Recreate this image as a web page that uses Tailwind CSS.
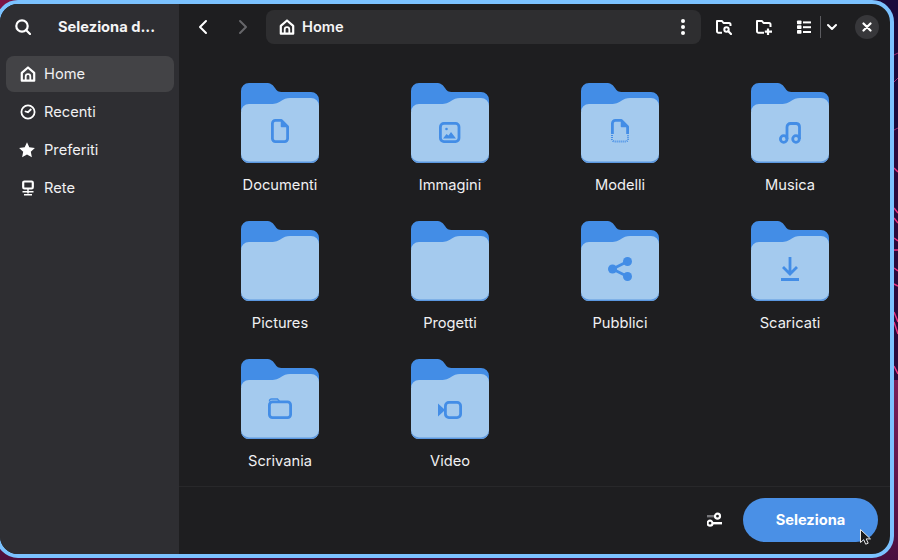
<!DOCTYPE html>
<html><head><meta charset="utf-8"><script src="https://cdn.jsdelivr.net/npm/@tailwindcss/browser@4"></script></head>
<body class="m-0 overflow-hidden bg-[#4a0f3c]">
<div class="relative w-[898px] h-[560px] overflow-hidden bg-[#4a1040] font-['Inter','Noto_Sans',sans-serif] text-white">
  <svg class="absolute inset-0" width="898" height="560" fill="none">
    <defs><linearGradient id="low" x1="0" y1="0" x2="0" y2="1"><stop offset="0" stop-color="#7a2058"/><stop offset="1" stop-color="#4a1040"/></linearGradient></defs>
    <rect x="0" y="545" width="898" height="15" fill="#4a1040"/>
    <rect x="0" y="0" width="30" height="30" fill="#7a1545"/>
    <rect x="0" y="530" width="20" height="30" fill="#4f0f3e"/>
    <rect x="860" y="0" width="38" height="130" fill="#1a0a3c"/>
    <rect x="890" y="130" width="8" height="250" fill="#2a0a3c"/>
    <rect x="890" y="380" width="8" height="180" fill="url(#low)"/>
    <g stroke="#a02a70" stroke-width="1"><path d="M894 55 898 53"/><path d="M894 82 898 78"/><path d="M894 130 898 128"/></g>
    <g stroke="#e8367f" stroke-width="1.500">
      <path d="M894 168 898 172"/><path d="M894 208 898 213"/><path d="M894 218 898 223"/><path d="M894 238 898 241"/><path d="M894 250 898 250"/><path d="M894 268 898 271"/><path d="M894 284 898 286"/><path d="M894 312 898 322"/><path d="M894 322 898 334"/><path d="M894 366 898 374"/>
    </g>
  </svg>
  <div class="absolute left-[-4px] top-0 w-[898px] h-[558px] border-4 border-[#7bc2ff] rounded-[22px] overflow-hidden flex bg-[#1e1e20]">
    <aside class="w-[179px] shrink-0 bg-[#2e2e32] flex flex-col">
      <div class="h-[46px] flex items-center">
        <svg class="ml-[15px] shrink-0" width="16" height="16" viewBox="0 0 16 16" fill="none" stroke="#fff" stroke-width="2.200"><circle cx="7" cy="7" r="5.700"/><path d="M11 11l4 4" stroke-linecap="round"/></svg>
        <span class="ml-[27px] text-[14.67px] font-bold text-[#f4f4f5]">Seleziona d...</span>
      </div>
      <nav class="pl-[6px] pr-[5px] pt-[6px] flex flex-col text-[14.67px] text-[#f0f0f2]">
        <div class="h-9 rounded-lg bg-[#434346] flex items-center gap-2 pl-[14px]">
          <svg width="16" height="16" viewBox="0 0 16 16" fill="none" stroke="#fff" stroke-width="2.200" stroke-linejoin="round"><path d="M1.800 6.800 8 1.500l6.200 5.300V14.700H1.800z"/><path d="M5.700 15V10.500a2.300 2.300 0 0 1 4.600 0V15" stroke-width="1.800"/></svg>
          <span>Home</span>
        </div>
        <div class="h-9 mt-[2px] flex items-center gap-2 pl-[14px]">
          <svg width="16" height="16" viewBox="0 0 16 16" fill="none" stroke="#fff" stroke-width="1.800" stroke-linecap="round"><circle cx="8" cy="8" r="6.600"/><path d="M5.500 7.500 8 8.200 10.800 5.500"/></svg>
          <span>Recenti</span>
        </div>
        <div class="h-9 mt-[2px] flex items-center gap-2 pl-[14px]">
          <svg class="ml-[-1px] mr-px" width="16" height="16" viewBox="0 0 16 16" fill="#fff"><path d="M8 .3l2.300 5 5.600.6-4.100 3.800 1.100 5.600L8 12.500l-4.900 2.800 1.100-5.600-4.100-3.800 5.600-.6z"/></svg>
          <span>Preferiti</span>
        </div>
        <div class="h-9 mt-[2px] flex items-center gap-2 pl-[14px]">
          <svg width="16" height="16" viewBox="0 0 16 16" fill="none" stroke="#fff"><rect x="3.200" y="1.500" width="9.600" height="7" rx="1.200" stroke-width="2.200"/><path d="M8 9v4.500M2.500 11.800h11M4 14.800h8" stroke-width="1.500"/></svg>
          <span>Rete</span>
        </div>
      </nav>
    </aside>
    <main class="flex-1 flex flex-col min-w-0">
      <header class="h-[46px] shrink-0 flex items-center relative">
        <svg class="ml-[18px]" width="12" height="16" viewBox="0 0 12 16" fill="none" stroke="#fff" stroke-width="2" stroke-linecap="round" stroke-linejoin="round"><path d="M9 2 3 8l6 6"/></svg>
        <svg class="ml-[28px]" width="12" height="16" viewBox="0 0 12 16" fill="none" stroke="#66666a" stroke-width="2" stroke-linecap="round" stroke-linejoin="round"><path d="M3 2l6 6-6 6"/></svg>
        <div class="ml-[17px] w-[435px] h-[34px] rounded-lg bg-[#2e2e30] flex items-center pl-[13px] pr-[16px]">
          <svg width="16" height="16" viewBox="0 0 16 16" fill="none" stroke="#fff" stroke-width="2.200" stroke-linejoin="round"><path d="M1.800 6.800 8 1.500l6.200 5.300V14.700H1.800z"/><path d="M5.700 15V10.500a2.300 2.300 0 0 1 4.600 0V15" stroke-width="1.800"/></svg>
          <span class="ml-[7px] text-[14.67px] font-semibold text-[#f4f4f5]">Home</span>
          <svg class="ml-auto" width="4" height="16" viewBox="0 0 4 16" fill="#fff"><circle cx="2" cy="2" r="2"/><circle cx="2" cy="8" r="2"/><circle cx="2" cy="14" r="2"/></svg>
        </div>
        <svg class="ml-[15px]" width="16" height="16" viewBox="0 0 16 16" fill="none" stroke="#fff" stroke-width="2" stroke-linejoin="round"><path d="M6 13.800H2.500a1.500 1.500 0 0 1-1.500-1.500V2h5l1.500 2H13a1.500 1.500 0 0 1 1.500 1.500V7"/><circle cx="10.500" cy="10.500" r="2.200"/><path d="M12.300 12.300 15 15" stroke-linecap="round" stroke-width="2.200"/></svg>
        <svg class="ml-[24px]" width="16" height="16" viewBox="0 0 16 16" fill="none" stroke="#fff" stroke-width="2" stroke-linejoin="round"><path d="M8 13.800H2.500A1.500 1.500 0 0 1 1 12.300V2h5l1.500 2H13a1.500 1.500 0 0 1 1.500 1.500V8"/><path d="M12 9.500V16M8.800 12.700h7.200" stroke-width="2.200"/></svg>
        <svg class="ml-[24px]" width="16" height="16" viewBox="0 0 16 16" fill="#fff"><rect x="1" y="1.500" width="4.500" height="3.800" rx=".8"/><rect x="1" y="6.300" width="4.500" height="3.800" rx=".8"/><rect x="1" y="11" width="4.500" height="3.800" rx=".8"/><rect x="7" y="2.400" width="8" height="2"/><rect x="7" y="7.200" width="8" height="2"/><rect x="7" y="12" width="8" height="2"/></svg>
        <div class="ml-[8px] w-px h-[22px] bg-[#5c5c60]"></div>
        <svg class="ml-[6px]" width="10" height="8" viewBox="0 0 10 8" fill="none" stroke="#fff" stroke-width="2" stroke-linecap="round" stroke-linejoin="round"><path d="M1 2l4 4 4-4"/></svg>
        <div class="ml-[18px] w-6 h-6 rounded-full bg-[#37373a] flex items-center justify-center">
          <svg width="10" height="10" viewBox="0 0 10 10" fill="none" stroke="#fff" stroke-width="2.200" stroke-linecap="round"><path d="M1.500 1.500l7 7M8.500 1.500l-7 7"/></svg>
        </div>
      </header>
      <section class="h-[436px] shrink-0 overflow-hidden pl-4 pt-[33px] grid grid-cols-[170px_170px_170px_170px] grid-rows-[138px_138px_1fr] text-[14.67px] text-[#f0f0f2]">

        <div class="flex flex-col items-center">
          <div class="relative w-[78px] h-[80px]">
            <svg width="78" height="80" viewBox="0 0 78 80" class="absolute inset-0"><path d="M0 28V8a8 8 0 0 1 8-8h17c5 0 7 2 9 5s3 4 8 4h28a8 8 0 0 1 8 8v20z" fill="#438de6"/><path d="M0 72V29a8 8 0 0 1 8-8h22c5 0 7-1 10-3s5-3 9-3h21a8 8 0 0 1 8 8v49a8 8 0 0 1-8 8H8a8 8 0 0 1-8-8z" fill="#a4caee"/><path d="M0 72a8 8 0 0 0 8 8h62a8 8 0 0 0 8-8v-1a8 8 0 0 1-8 7.500H8A8 8 0 0 1 0 71z" fill="#5a97e0"/></svg>
            <svg class="absolute left-[30px] top-[36px]" width="18" height="24" viewBox="0 0 18 24" fill="none" stroke="#438de6" stroke-width="2.800" stroke-linejoin="round"><path d="M4.400 1.400h6l6.200 6.400v11.800a3 3 0 0 1-3 3H4.400a3 3 0 0 1-3-3V4.400a3 3 0 0 1 3-3z"/><path d="M10.500 1.500V7.500h6" stroke-width="1.500" fill="#438de6"/></svg>
          </div>
          <span class="mt-[13px] leading-[18px]">Documenti</span>
        </div>

        <div class="flex flex-col items-center">
          <div class="relative w-[78px] h-[80px]">
            <svg width="78" height="80" viewBox="0 0 78 80" class="absolute inset-0"><path d="M0 28V8a8 8 0 0 1 8-8h17c5 0 7 2 9 5s3 4 8 4h28a8 8 0 0 1 8 8v20z" fill="#438de6"/><path d="M0 72V29a8 8 0 0 1 8-8h22c5 0 7-1 10-3s5-3 9-3h21a8 8 0 0 1 8 8v49a8 8 0 0 1-8 8H8a8 8 0 0 1-8-8z" fill="#a4caee"/><path d="M0 72a8 8 0 0 0 8 8h62a8 8 0 0 0 8-8v-1a8 8 0 0 1-8 7.500H8A8 8 0 0 1 0 71z" fill="#5a97e0"/></svg>
            <svg class="absolute left-[28px] top-[39px]" width="22" height="21" viewBox="0 0 22 21" fill="none"><rect x="1.400" y="1.400" width="18.600" height="18.200" rx="3.500" stroke="#438de6" stroke-width="2.800"/><circle cx="7.500" cy="7" r="1.300" fill="#438de6"/><path d="M4 16.500l3.500-4.500 2 1.500 2.500-3.500 5 6.500z" fill="#438de6"/></svg>
          </div>
          <span class="mt-[13px] leading-[18px]">Immagini</span>
        </div>

        <div class="flex flex-col items-center">
          <div class="relative w-[78px] h-[80px]">
            <svg width="78" height="80" viewBox="0 0 78 80" class="absolute inset-0"><path d="M0 28V8a8 8 0 0 1 8-8h17c5 0 7 2 9 5s3 4 8 4h28a8 8 0 0 1 8 8v20z" fill="#438de6"/><path d="M0 72V29a8 8 0 0 1 8-8h22c5 0 7-1 10-3s5-3 9-3h21a8 8 0 0 1 8 8v49a8 8 0 0 1-8 8H8a8 8 0 0 1-8-8z" fill="#a4caee"/><path d="M0 72a8 8 0 0 0 8 8h62a8 8 0 0 0 8-8v-1a8 8 0 0 1-8 7.500H8A8 8 0 0 1 0 71z" fill="#5a97e0"/></svg>
            <svg class="absolute left-[30px] top-[36px]" width="18" height="24" viewBox="0 0 18 24" fill="none" stroke="#438de6" stroke-width="2.800" stroke-linejoin="round"><path d="M1.400 15V4.400a3 3 0 0 1 3-3h6l6.200 6.400V15"/><path d="M10.500 1.500V7.500h6" stroke-width="1.500" fill="#438de6"/><path d="M1 16v4a2.500 2.500 0 0 0 2.500 2.500h11a2.500 2.500 0 0 0 2.500-2.500v-4" stroke-dasharray="1 1" stroke-width="2"/></svg>
          </div>
          <span class="mt-[13px] leading-[18px]">Modelli</span>
        </div>

        <div class="flex flex-col items-center">
          <div class="relative w-[78px] h-[80px]">
            <svg width="78" height="80" viewBox="0 0 78 80" class="absolute inset-0"><path d="M0 28V8a8 8 0 0 1 8-8h17c5 0 7 2 9 5s3 4 8 4h28a8 8 0 0 1 8 8v20z" fill="#438de6"/><path d="M0 72V29a8 8 0 0 1 8-8h22c5 0 7-1 10-3s5-3 9-3h21a8 8 0 0 1 8 8v49a8 8 0 0 1-8 8H8a8 8 0 0 1-8-8z" fill="#a4caee"/><path d="M0 72a8 8 0 0 0 8 8h62a8 8 0 0 0 8-8v-1a8 8 0 0 1-8 7.500H8A8 8 0 0 1 0 71z" fill="#5a97e0"/></svg>
            <svg class="absolute left-[28px] top-[39px]" width="23" height="22" viewBox="0 0 23 22" fill="none" stroke="#438de6" stroke-width="2.800"><circle cx="4.700" cy="17" r="3.300"/><circle cx="17" cy="17" r="3.300"/><path d="M8 17V5a3.500 3.500 0 0 1 3.500-3.500h6a3.500 3.500 0 0 1 3 3.500v12"/></svg>
          </div>
          <span class="mt-[13px] leading-[18px]">Musica</span>
        </div>

        <div class="flex flex-col items-center">
          <div class="relative w-[78px] h-[80px]">
            <svg width="78" height="80" viewBox="0 0 78 80" class="absolute inset-0"><path d="M0 28V8a8 8 0 0 1 8-8h17c5 0 7 2 9 5s3 4 8 4h28a8 8 0 0 1 8 8v20z" fill="#438de6"/><path d="M0 72V29a8 8 0 0 1 8-8h22c5 0 7-1 10-3s5-3 9-3h21a8 8 0 0 1 8 8v49a8 8 0 0 1-8 8H8a8 8 0 0 1-8-8z" fill="#a4caee"/><path d="M0 72a8 8 0 0 0 8 8h62a8 8 0 0 0 8-8v-1a8 8 0 0 1-8 7.500H8A8 8 0 0 1 0 71z" fill="#5a97e0"/></svg>
          </div>
          <span class="mt-[13px] leading-[18px]">Pictures</span>
        </div>

        <div class="flex flex-col items-center">
          <div class="relative w-[78px] h-[80px]">
            <svg width="78" height="80" viewBox="0 0 78 80" class="absolute inset-0"><path d="M0 28V8a8 8 0 0 1 8-8h17c5 0 7 2 9 5s3 4 8 4h28a8 8 0 0 1 8 8v20z" fill="#438de6"/><path d="M0 72V29a8 8 0 0 1 8-8h22c5 0 7-1 10-3s5-3 9-3h21a8 8 0 0 1 8 8v49a8 8 0 0 1-8 8H8a8 8 0 0 1-8-8z" fill="#a4caee"/><path d="M0 72a8 8 0 0 0 8 8h62a8 8 0 0 0 8-8v-1a8 8 0 0 1-8 7.500H8A8 8 0 0 1 0 71z" fill="#5a97e0"/></svg>
          </div>
          <span class="mt-[13px] leading-[18px]">Progetti</span>
        </div>

        <div class="flex flex-col items-center">
          <div class="relative w-[78px] h-[80px]">
            <svg width="78" height="80" viewBox="0 0 78 80" class="absolute inset-0"><path d="M0 28V8a8 8 0 0 1 8-8h17c5 0 7 2 9 5s3 4 8 4h28a8 8 0 0 1 8 8v20z" fill="#438de6"/><path d="M0 72V29a8 8 0 0 1 8-8h22c5 0 7-1 10-3s5-3 9-3h21a8 8 0 0 1 8 8v49a8 8 0 0 1-8 8H8a8 8 0 0 1-8-8z" fill="#a4caee"/><path d="M0 72a8 8 0 0 0 8 8h62a8 8 0 0 0 8-8v-1a8 8 0 0 1-8 7.500H8A8 8 0 0 1 0 71z" fill="#5a97e0"/></svg>
            <svg class="absolute left-[27px] top-[36px]" width="24" height="24" viewBox="0 0 24 24" fill="#438de6"><circle cx="4.500" cy="12" r="4.500"/><circle cx="19.500" cy="4.500" r="4.500"/><circle cx="19.500" cy="19.500" r="4.500"/><path d="M4.500 12 19.500 4.500M4.500 12l15 7.500" stroke="#438de6" stroke-width="2.800"/></svg>
          </div>
          <span class="mt-[13px] leading-[18px]">Pubblici</span>
        </div>

        <div class="flex flex-col items-center">
          <div class="relative w-[78px] h-[80px]">
            <svg width="78" height="80" viewBox="0 0 78 80" class="absolute inset-0"><path d="M0 28V8a8 8 0 0 1 8-8h17c5 0 7 2 9 5s3 4 8 4h28a8 8 0 0 1 8 8v20z" fill="#438de6"/><path d="M0 72V29a8 8 0 0 1 8-8h22c5 0 7-1 10-3s5-3 9-3h21a8 8 0 0 1 8 8v49a8 8 0 0 1-8 8H8a8 8 0 0 1-8-8z" fill="#a4caee"/><path d="M0 72a8 8 0 0 0 8 8h62a8 8 0 0 0 8-8v-1a8 8 0 0 1-8 7.500H8A8 8 0 0 1 0 71z" fill="#5a97e0"/></svg>
            <svg class="absolute left-[30px] top-[36px]" width="18" height="24" viewBox="0 0 18 24" fill="none" stroke="#438de6" stroke-width="2.800"><path d="M9 0v17M2 10l7 7 7-7"/><path d="M0 22.500h18" stroke-width="3"/></svg>
          </div>
          <span class="mt-[13px] leading-[18px]">Scaricati</span>
        </div>

        <div class="flex flex-col items-center">
          <div class="relative w-[78px] h-[80px]">
            <svg width="78" height="80" viewBox="0 0 78 80" class="absolute inset-0"><path d="M0 28V8a8 8 0 0 1 8-8h17c5 0 7 2 9 5s3 4 8 4h28a8 8 0 0 1 8 8v20z" fill="#438de6"/><path d="M0 72V29a8 8 0 0 1 8-8h22c5 0 7-1 10-3s5-3 9-3h21a8 8 0 0 1 8 8v49a8 8 0 0 1-8 8H8a8 8 0 0 1-8-8z" fill="#a4caee"/><path d="M0 72a8 8 0 0 0 8 8h62a8 8 0 0 0 8-8v-1a8 8 0 0 1-8 7.500H8A8 8 0 0 1 0 71z" fill="#5a97e0"/></svg>
            <svg class="absolute left-[27px] top-[39px]" width="24" height="21" viewBox="0 0 24 21" fill="none" stroke="#438de6"><rect x="1.400" y="3.900" width="21.200" height="15.700" rx="3" stroke-width="2.800"/><path d="M1.500 3.500V3a2 2 0 0 1 2-2h6l2 2.500" stroke-width="1.400"/></svg>
          </div>
          <span class="mt-[13px] leading-[18px]">Scrivania</span>
        </div>

        <div class="flex flex-col items-center">
          <div class="relative w-[78px] h-[80px]">
            <svg width="78" height="80" viewBox="0 0 78 80" class="absolute inset-0"><path d="M0 28V8a8 8 0 0 1 8-8h17c5 0 7 2 9 5s3 4 8 4h28a8 8 0 0 1 8 8v20z" fill="#438de6"/><path d="M0 72V29a8 8 0 0 1 8-8h22c5 0 7-1 10-3s5-3 9-3h21a8 8 0 0 1 8 8v49a8 8 0 0 1-8 8H8a8 8 0 0 1-8-8z" fill="#a4caee"/><path d="M0 72a8 8 0 0 0 8 8h62a8 8 0 0 0 8-8v-1a8 8 0 0 1-8 7.500H8A8 8 0 0 1 0 71z" fill="#5a97e0"/></svg>
            <svg class="absolute left-[27px] top-[42px]" width="24" height="18" viewBox="0 0 24 18" fill="none"><rect x="7.400" y="1.400" width="15.200" height="15.200" rx="3.500" stroke="#438de6" stroke-width="2.800"/><path d="M0 2.500 6 8v2l-6 5.500z" fill="#438de6"/></svg>
          </div>
          <span class="mt-[13px] leading-[18px]">Video</span>
        </div>
      </section>
      <footer class="h-[68px] shrink-0 border-t border-[#28282a] flex items-center justify-end pr-[12px] pb-px">
        <svg class="mr-[20px]" width="16" height="16" viewBox="0 0 16 16" fill="none"><rect x="0" y="3" width="8" height="2.400" fill="#77777a"/><circle cx="10.500" cy="4.200" r="2.500" stroke="#fff" stroke-width="2.200"/><circle cx="3" cy="11.200" r="2.500" stroke="#fff" stroke-width="2.200"/><rect x="5" y="10" width="10" height="2.400" fill="#fff"/></svg>
        <button class="w-[135px] h-[44px] rounded-[22px] bg-[#4a90e6] text-[14.67px] font-bold text-white">Seleziona</button>
      </footer>
    </main>
  </div>
  <svg class="absolute left-[859px] top-[528px]" width="14" height="18" viewBox="0 0 14 18"><path d="M1.500 1.500v13l3.200-2.800 2 4.500 2.500-1-2-4.300h4.300z" fill="#1a1a1c" stroke="#e8e8e8" stroke-width="1"/></svg>
</div>
</body></html>
